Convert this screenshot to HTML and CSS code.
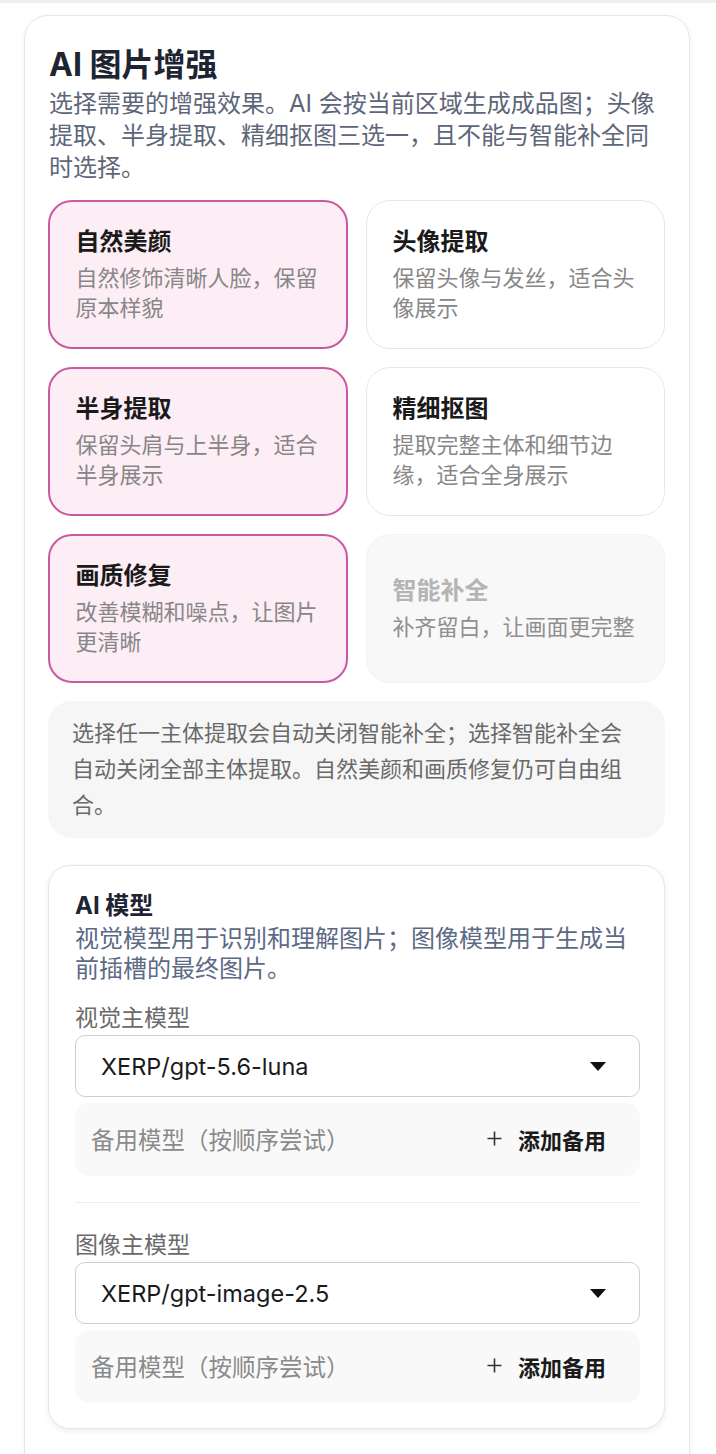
FILE: index.html
```html
<!DOCTYPE html>
<html lang="zh-CN">
<head>
<meta charset="utf-8">
<title>AI 图片增强</title>
<link rel="stylesheet" href="styles.css">
</head>
<body>
<div class="topbar"></div>
<section class="panel">
  <h1 class="panel-title">AI 图片增强</h1>
  <p class="panel-sub">选择需要的增强效果。AI 会按当前区域生成成品图；头像提取、半身提取、精细抠图三选一，且不能与智能补全同时选择。</p>

  <div class="options">
    <div class="opt selected">
      <div class="opt-title">自然美颜</div>
      <div class="opt-desc">自然修饰清晰人脸，保留原本样貌</div>
    </div>
    <div class="opt">
      <div class="opt-title">头像提取</div>
      <div class="opt-desc">保留头像与发丝，适合头像展示</div>
    </div>
    <div class="opt selected">
      <div class="opt-title">半身提取</div>
      <div class="opt-desc">保留头肩与上半身，适合半身展示</div>
    </div>
    <div class="opt">
      <div class="opt-title">精细抠图</div>
      <div class="opt-desc">提取完整主体和细节边缘，适合全身展示</div>
    </div>
    <div class="opt selected">
      <div class="opt-title">画质修复</div>
      <div class="opt-desc">改善模糊和噪点，让图片更清晰</div>
    </div>
    <div class="opt disabled">
      <div class="opt-title">智能补全</div>
      <div class="opt-desc">补齐留白，让画面更完整</div>
    </div>
  </div>

  <div class="note">选择任一主体提取会自动关闭智能补全；选择智能补全会自动关闭全部主体提取。自然美颜和画质修复仍可自由组合。</div>

  <div class="models">
    <h2 class="models-title">AI 模型</h2>
    <p class="models-sub">视觉模型用于识别和理解图片；图像模型用于生成当前插槽的最终图片。</p>

    <div class="field">
      <div class="field-label">视觉主模型</div>
      <div class="select">
        <span class="select-value">XERP/gpt-5.6-luna</span>
        <svg class="caret" width="16" height="9" viewBox="0 0 16 9"><path d="M0 0 H16 L8 9 Z" fill="#111"/></svg>
      </div>
      <div class="backup">
        <span class="backup-label">备用模型（按顺序尝试）</span>
        <span class="backup-add">
          <svg width="15" height="15" viewBox="0 0 15 15"><path d="M7.5 0.5 V14.5 M0.5 7.5 H14.5" stroke="#333" stroke-width="1.6"/></svg>
          添加备用
        </span>
      </div>
    </div>

    <div class="divider"></div>

    <div class="field">
      <div class="field-label">图像主模型</div>
      <div class="select">
        <span class="select-value">XERP/gpt-image-2.5</span>
        <svg class="caret" width="16" height="9" viewBox="0 0 16 9"><path d="M0 0 H16 L8 9 Z" fill="#111"/></svg>
      </div>
      <div class="backup">
        <span class="backup-label">备用模型（按顺序尝试）</span>
        <span class="backup-add">
          <svg width="15" height="15" viewBox="0 0 15 15"><path d="M7.5 0.5 V14.5 M0.5 7.5 H14.5" stroke="#333" stroke-width="1.6"/></svg>
          添加备用
        </span>
      </div>
    </div>
  </div>
</section>
</body>
</html>
```

FILE: styles.css
```css
* { box-sizing: border-box; }

html, body {
  margin: 0;
  padding: 0;
  background: #ffffff;
}

body {
  font-family: "Inter", "Noto Sans CJK SC", sans-serif;
  color: #1a1a1a;
}

.topbar {
  height: 3px;
  background: #efefef;
}

.panel {
  margin: 12px 26px 0 24px;
  width: 666px;
  border: 1px solid #e7e7e7;
  border-radius: 24px;
  padding: 29px 24px 60px 23px;
  background: #fff;
  box-shadow: 0 1px 6px rgba(0, 0, 0, 0.05);
}

.panel-title {
  margin: 0;
  font-size: 32px;
  line-height: 40px;
  font-weight: 700;
  color: #1e2432;
  padding-left: 1px;
}

.panel-sub {
  margin: 3px 0 0 0;
  font-size: 24px;
  line-height: 32px;
  color: #5d6678;
  padding-left: 1px;
}

.options {
  margin-top: 16px;
  display: grid;
  grid-template-columns: 1fr 1fr;
  grid-auto-rows: 149px;
  gap: 18px;
}

.opt {
  border: 1.5px solid #e8e8e8;
  border-radius: 24px;
  background: #fff;
  padding: 0 26px 0 26px;
  display: flex;
  flex-direction: column;
  justify-content: center;
}

.opt.selected {
  background: #fdedf5;
  border: 2px solid #c85a9f;
  padding-left: 25.5px;
}

.opt.disabled {
  background: #f8f8f8;
  border-color: #f3f3f3;
}

.opt-title {
  font-size: 24px;
  line-height: 30px;
  font-weight: 700;
  color: #1a1a1a;
}

.opt-desc {
  margin-top: 6px;
  font-size: 22px;
  line-height: 30px;
  color: #878787;
}

.opt.disabled .opt-title {
  color: #b4b4b4;
}

.opt.disabled .opt-desc {
  color: #8f8f8f;
}

.note {
  margin-top: 18px;
  background: #f6f6f6;
  border-radius: 24px;
  padding: 14px 24px 15px 24px;
  font-size: 22px;
  line-height: 36px;
  color: #6a6a6a;
}

.models {
  margin-top: 27px;
  border: 1px solid #e6e6e6;
  border-radius: 22px;
  padding: 24px 24px 25px 26px;
  background: #fff;
  box-shadow: 0 2px 6px rgba(0, 0, 0, 0.08);
}

.models-title {
  margin: 0;
  font-size: 24px;
  line-height: 32px;
  font-weight: 700;
  color: #1e2432;
}

.models-sub {
  margin: 2px 0 0 0;
  font-size: 24px;
  line-height: 30px;
  color: #5c6a85;
}

.field-label {
  margin-top: 18px;
  font-size: 23px;
  line-height: 32px;
  color: #6a6a6a;
}

.select {
  margin-top: 1px;
  height: 62px;
  border: 1.5px solid #cfcfcf;
  border-radius: 10px;
  display: flex;
  align-items: center;
  justify-content: space-between;
  padding: 0 33px 0 25px;
  background: #fff;
}

.select-value {
  font-size: 23.5px;
  color: #1a1a1a;
}

.backup {
  margin-top: 6px;
  height: 73px;
  background: #f9f9f9;
  border-radius: 14px;
  display: flex;
  align-items: center;
  justify-content: space-between;
  padding: 0 34px 2px 16px;
}

.backup-label {
  font-size: 23.5px;
  color: #8a8a8a;
}

.backup-add {
  display: flex;
  align-items: center;
  gap: 16px;
  font-size: 22px;
  font-weight: 700;
  color: #1a1a1a;
}

.divider {
  margin-top: 26px;
  height: 1px;
  background: #ececec;
}

.divider + .field .field-label {
  margin-top: 26px;
}
```
